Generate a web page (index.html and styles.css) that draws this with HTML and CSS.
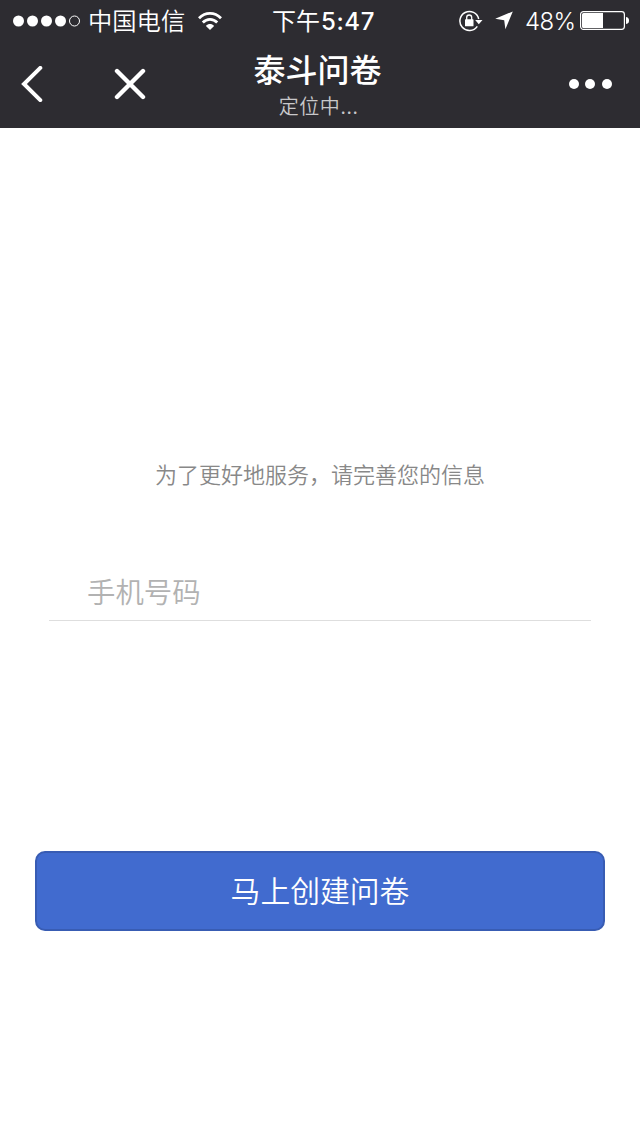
FILE: index.html
```html
<!DOCTYPE html>
<html lang="zh-CN">
<head>
<meta charset="utf-8">
<title>泰斗问卷</title>
<link rel="stylesheet" href="styles.css">
</head>
<body>
<header class="top">
  <div class="status">
    <div class="status-left">
      <svg class="signal" width="68" height="12" viewBox="0 0 68 12" fill="#fff"><circle cx="5.5" cy="6" r="5.5"/><circle cx="19.5" cy="6" r="5.5"/><circle cx="33.5" cy="6" r="5.5"/><circle cx="47.5" cy="6" r="5.5"/><circle cx="61.5" cy="6" r="5" fill="none" stroke="#fff"/></svg>
      <span class="carrier">中国电信</span>
      <svg class="wifi" width="26" height="20" viewBox="0 0 26 20"><g fill="none" stroke="#fff" stroke-width="2.8"><path d="M2 7.2C8.4 .8 17.6 .8 24 7.2"/><path d="M5.8 11.6C10 7.4 16 7.4 20.2 11.6"/></g><path d="M8.9 14.9C11.3 12.5 14.7 12.5 17.1 14.9L13 19z" fill="#fff"/></svg>
    </div>
    <span class="time">下午<b class="digits">5:47</b></span>
    <div class="status-right">
      <svg class="lock" width="24" height="22" viewBox="0 0 24 22"><path d="M18.3 16.3A9.5 9.5 0 1 1 19.7 9" fill="none" stroke="#fff" stroke-width="1.5"/><path d="M16.2 10H23.5L19.8 14.2z" fill="#fff"/><rect x="6" y="9.3" width="8.5" height="7" rx=".6" fill="#fff"/><path d="M7.7 10V7.5a2.5 2.5 0 0 1 5 0V10" fill="none" stroke="#fff" stroke-width="1.3"/></svg>
      <svg class="arrow" width="18" height="19" viewBox="0 0 18 19"><path d="M17.8 .4L.2 7.8 9.2 9.2 10.4 18.3z" fill="#fff"/></svg>
      <span class="percent">48%</span>
      <svg class="battery" width="49" height="19" viewBox="0 0 49 19"><rect x=".6" y=".6" width="43.8" height="17.8" rx="2.8" fill="none" stroke="#fff" stroke-width="1.2"/><path d="M3.5 2H23V17H3.5Q2 17 2 15.5V3.5Q2 2 3.5 2zM46 6C48.8 6.5 49 8 49 9.5S48.8 12.5 46 13z" fill="#fff"/></svg>
    </div>
  </div>
  <nav class="nav">
    <div class="nav-left">
      <svg width="22" height="36" viewBox="0 0 22 36"><path d="M19.3 1.9L3 18 19.3 34.1" fill="none" stroke="#fff" stroke-width="4" stroke-linecap="round"/></svg>
      <svg class="close" width="32" height="32" viewBox="0 0 32 32"><path d="M3 3L29 29M29 3L3 29" fill="none" stroke="#fff" stroke-width="4.4" stroke-linecap="round"/></svg>
    </div>
    <div class="heading">
      <h1 class="title">泰斗问卷</h1>
      <p class="subtitle">定位中...</p>
    </div>
    <svg class="more" width="44" height="10" viewBox="0 0 44 10" fill="#fff"><circle cx="5" cy="5" r="5"/><circle cx="21" cy="5" r="5"/><circle cx="38" cy="5" r="5"/></svg>
  </nav>
</header>
<main class="content">
  <p class="intro">为了更好地服务，请完善您的信息</p>
  <input class="phone" type="tel" placeholder="手机号码" aria-label="手机号码">
  <button class="submit" type="button">马上创建问卷</button>
</main>
</body>
</html>
```
FILE: styles.css
```css
* { box-sizing: border-box; }
body {
  margin: 0;
  min-height: 1136px;
  background: #fff;
  font-family: "Noto Sans CJK SC", sans-serif;
  font-weight: 350;
}
h1, p { margin: 0; }
svg { display: block; flex: none; }
.top { height: 128px; background: #2d2c31; color: #fff; }
.status {
  display: grid;
  grid-template-columns: 272px 1fr auto;
  height: 40px;
  padding-right: 11px;
  align-items: center;
  line-height: 40px;
  white-space: nowrap;
}
.status-left, .status-right { display: flex; align-items: center; height: 40px; }
.status-left { padding-left: 13px; }
.carrier { margin-left: 7px; font-size: 24.3px; line-height: 38px; padding-bottom: 2px; }
.wifi { margin-left: 12px; }
.time { font-size: 24px; font-weight: 400; }
.digits { font-family: Inter, sans-serif; font-size: 24px; font-weight: 500; letter-spacing: 0.6px; margin-left: 1px; }
.lock { margin-bottom: 1px; }
.arrow { margin-left: 12px; margin-bottom: 1px; }
.percent { width: 55px; margin-left: 12px; padding-top: 1px; font-family: Inter, sans-serif; font-size: 24px; font-weight: 300; letter-spacing: -0.6px; }
.battery { margin-bottom: 1px; }
.nav {
  display: grid;
  grid-template-columns: 1fr 136px 1fr;
  height: 88px;
  padding: 0 27px 0 21px;
  align-items: center;
}
.nav-left { display: flex; align-items: center; }
.close { margin-left: 71px; }
.heading { padding-left: 1px; text-align: center; height: 88px; }
.title { margin-top: 4px; font-size: 32px; line-height: 48px; font-weight: 500; white-space: nowrap; }
.subtitle { padding: 2px 0 0 2px; font-size: 20px; line-height: 24px; color: #c8c8ca; letter-spacing: 0.6px; }
.more { justify-self: end; }
.content { display: flex; flex-direction: column; padding: 329px 35px 0; }
.intro { font-size: 22px; line-height: 32px; text-align: center; color: #888; }
.phone {
  height: 59px;
  margin: 73px 14px 0;
  padding: 0 38px 1px;
  border: 0;
  border-bottom: 1px solid #dedede;
  border-radius: 0;
  background: none;
  outline: 0;
  font: 350 28.4px "Noto Sans CJK SC", sans-serif;
}
.phone::placeholder { color: #b2b2b2; opacity: 1; }
.submit {
  height: 80px;
  margin-top: 230px;
  padding: 0 0 5px;
  border: 2px solid #385cb3;
  border-radius: 10px;
  background: #416bcf;
  color: #fff;
  font: 350 29.8px/70px "Noto Sans CJK SC", sans-serif;
}
```
